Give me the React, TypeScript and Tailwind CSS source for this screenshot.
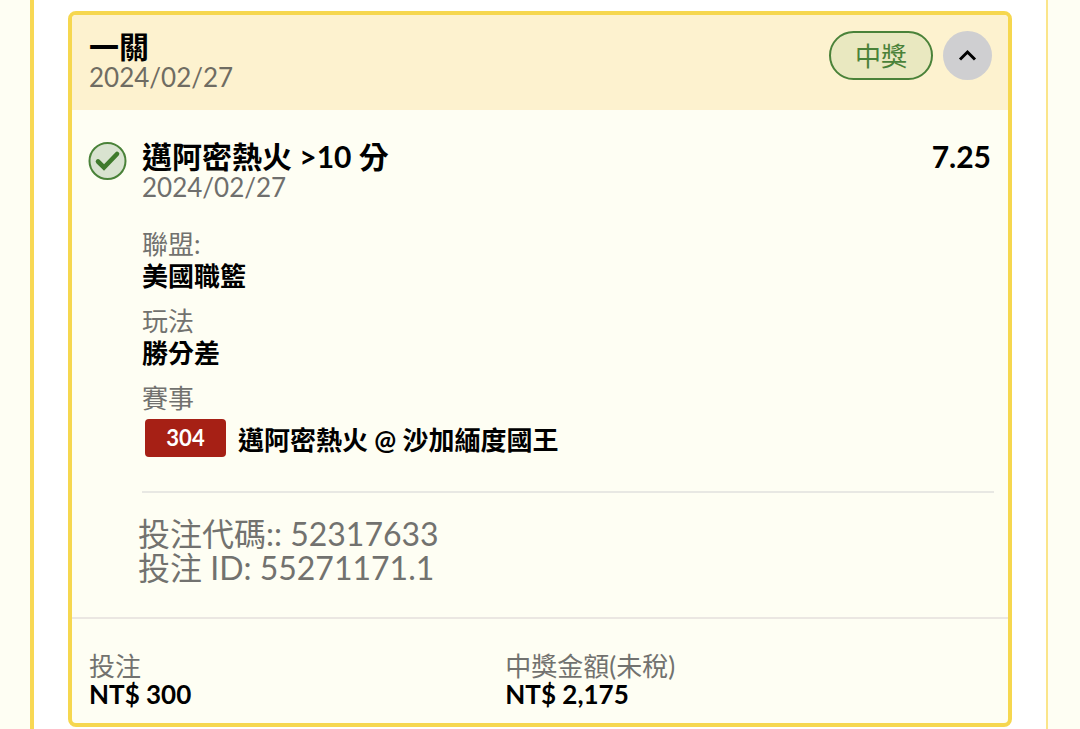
import { useState } from 'react';

type DetailItem = { label: string; value: string };
type AmountItem = { label: string; value: string };

const details: DetailItem[] = [
  { label: '聯盟:', value: '美國職籃' },
  { label: '玩法', value: '勝分差' },
];

const amounts: AmountItem[] = [
  { label: '投注', value: 'NT$ 300' },
  { label: '中獎金額(未稅)', value: 'NT$ 2,175' },
];

function CheckIcon() {
  return (
    <svg className="h-10 w-10 shrink-0" viewBox="0 0 40 40" fill="none" aria-label="中獎">
      <circle cx="19.5" cy="20" r="18" fill="#d9e3d0" stroke="#4a8239" strokeWidth="2" />
      <path
        d="M10 20.5 L16 26.5 L29 13"
        stroke="#3f7a2c"
        strokeWidth="4.6"
        strokeLinecap="round"
      />
    </svg>
  );
}

function ChevronUpIcon() {
  return (
    <svg width="20" height="16" viewBox="0 0 20 16" fill="none" aria-hidden="true">
      <path d="M2 11.5 L9.5 4 L17 11.5" stroke="#000" strokeWidth="3" />
    </svg>
  );
}

export default function App() {
  const [open, setOpen] = useState(true);

  return (
    <div className="min-h-screen bg-[#fefef3] pl-[30px] pr-8 font-['Lato','Noto_Sans_CJK_TC',sans-serif]" lang="zh-Hant">
      <main className="min-h-screen border-l-4 border-r-2 border-l-[#f8d854] border-r-[#fbe58a] bg-white pl-[34px] pr-[34px] pt-[11px]">
        <article className="overflow-hidden rounded-lg border-4 border-[#f6d74f] bg-[#fefef3]">
          {/* Header */}
          <header className="flex items-start justify-between bg-[#fdf2cf] pb-[17px] pl-[17px] pr-4 pt-4">
            <div>
              <h1 className="text-[30px] font-bold leading-[30px] text-black">一關</h1>
              <p className="text-[26px] leading-8 text-[#6f6c62]">2024/02/27</p>
            </div>
            <div className="flex items-center gap-[10px]">
              <span className="flex h-[49px] w-[104px] items-center justify-center rounded-full border-2 border-[#4a8239] bg-[#e9e8c0] pt-px text-[26px] leading-8 text-[#4a8239]">
                中獎
              </span>
              <button
                type="button"
                aria-label="收合"
                aria-expanded={open}
                onClick={() => setOpen(!open)}
                className="flex h-[49px] w-[49px] items-center justify-center rounded-full bg-[#cfcfd1]"
              >
                <ChevronUpIcon />
              </button>
            </div>
          </header>

          {/* Selection */}
          {open && (
            <section className="flex gap-[14px] pb-8 pl-4 pr-[14px] pt-[31px]">
              <CheckIcon />
              <div className="min-w-0 flex-1">
                <div className="flex items-start justify-between pr-[3px]">
                  <div>
                    <h2 className="text-[30px] font-bold leading-[30px] text-black">邁阿密熱火 &gt;10 分</h2>
                    <p className="text-[26px] leading-8 text-[#6f6f6d]">2024/02/27</p>
                  </div>
                  <span className="text-[30px] font-bold leading-[30px] text-black">7.25</span>
                </div>

                <dl className="mt-[25px] text-[26px] leading-8">
                  {details.map((item) => (
                    <div key={item.label} className="mb-[13px]">
                      <dt className="text-[#72726f]">{item.label}</dt>
                      <dd className="font-bold text-black">{item.value}</dd>
                    </div>
                  ))}
                  <div>
                    <dt className="text-[#72726f]">賽事</dt>
                    <dd className="mt-[5px] flex items-center gap-3 pl-[3px] font-bold text-black">
                      <span className="w-[81px] rounded bg-[#a62015] text-center text-[22px] font-bold leading-[38px] text-white">
                        304
                      </span>
                      <span className="pt-[3px]">邁阿密熱火 @ 沙加緬度國王</span>
                    </dd>
                  </div>
                </dl>

                <hr className="mt-[34px] border-t-2 border-[#e8e8e3]" />

                <div className="-ml-1 mt-6 text-[32px] leading-[34px] text-[#72726f]">
                  <p>投注代碼:: 52317633</p>
                  <p>投注 ID: 55271171.1</p>
                </div>
              </div>
            </section>
          )}

          {/* Amounts */}
          <dl className="grid grid-cols-[6fr_7fr] border-t-2 border-[#ebe7e2] px-[17px] pb-[15px] pt-8 text-[26px]">
            {amounts.map((item) => (
              <div key={item.label}>
                <dt className="leading-[30px] text-[#72726f]">{item.label}</dt>
                <dd className="font-bold leading-[27px] text-black">{item.value}</dd>
              </div>
            ))}
          </dl>
        </article>
      </main>
    </div>
  );
}
